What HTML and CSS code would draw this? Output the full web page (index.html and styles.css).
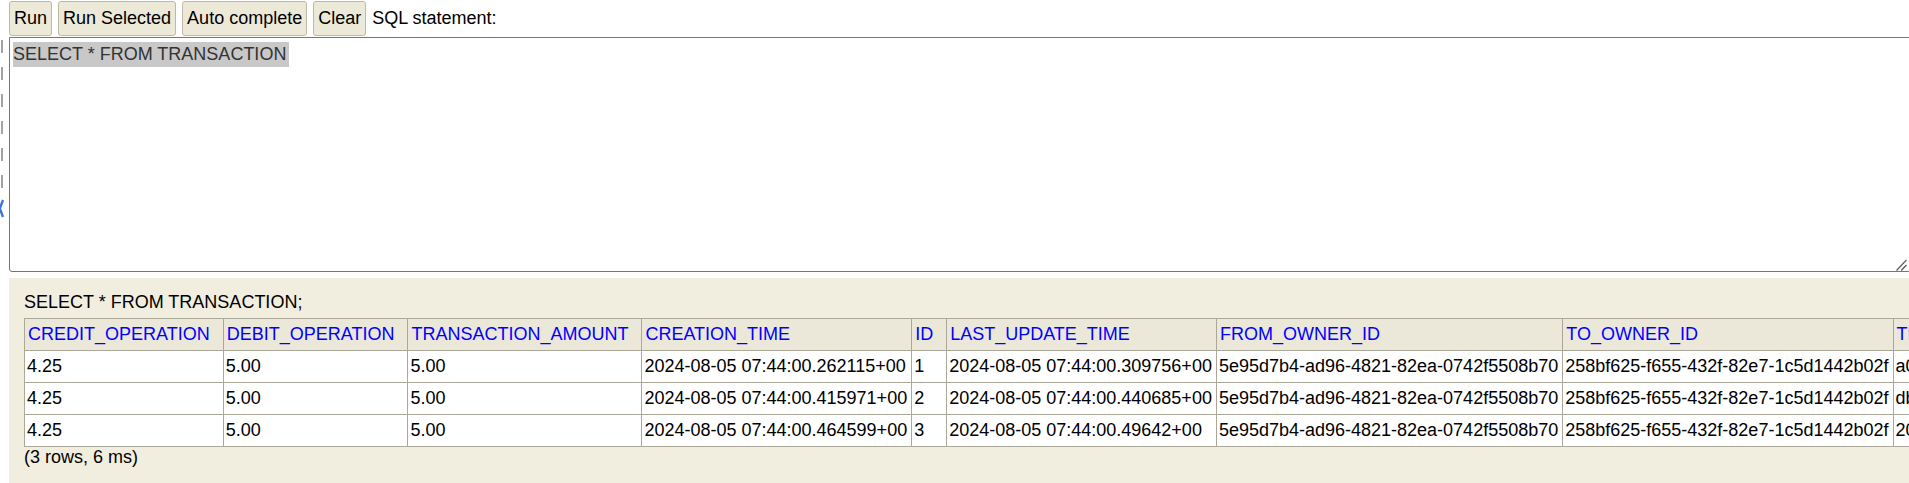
FILE: index.html
```html
<!DOCTYPE html>
<html>
<head>
<meta charset="utf-8">
<title>H2 Console</title>
<link rel="stylesheet" href="styles.css">
</head>
<body>
<div class="page">
  <div class="gutter">
    <div class="dashes"></div>
    <svg class="chev" width="5" height="20" viewBox="0 0 5 20"><path d="M4 1 L0.8 9.5 L4 18" fill="none" stroke="#3a78d4" stroke-width="2.4"/></svg>
  </div>
  <div class="main">
    <div class="toolbar">
      <button class="btn">Run</button>
      <button class="btn">Run Selected</button>
      <button class="btn">Auto complete</button>
      <button class="btn">Clear</button>
      <span class="label">SQL statement:</span>
    </div>
    <div class="editor">
      <span class="sel">SELECT * FROM TRANSACTION</span>
      <svg class="grip" width="12" height="12" viewBox="0 0 12 12"><path d="M0.5 11.5 L10.5 0.8 M5.2 11.5 L10.5 6" stroke="#555" stroke-width="1.2" fill="none"/></svg>
    </div>
    <div class="result">
      <div class="stmt">SELECT * FROM TRANSACTION;</div>
      <table class="grid">
        <thead>
          <tr>
            <th><a href="#">CREDIT_OPERATION</a></th>
            <th><a href="#">DEBIT_OPERATION</a></th>
            <th><a href="#">TRANSACTION_AMOUNT</a></th>
            <th><a href="#">CREATION_TIME</a></th>
            <th><a href="#">ID</a></th>
            <th><a href="#">LAST_UPDATE_TIME</a></th>
            <th><a href="#">FROM_OWNER_ID</a></th>
            <th><a href="#">TO_OWNER_ID</a></th>
            <th><a href="#">TRANSACTION_ID</a></th>
          </tr>
        </thead>
        <tbody>
          <tr>
            <td>4.25</td><td>5.00</td><td>5.00</td><td>2024-08-05 07:44:00.262115+00</td><td>1</td><td>2024-08-05 07:44:00.309756+00</td><td>5e95d7b4-ad96-4821-82ea-0742f5508b70</td><td>258bf625-f655-432f-82e7-1c5d1442b02f</td><td>a0c4e8f2-7b1d-4e39-9a56-3f2d8c1b7e40</td>
          </tr>
          <tr>
            <td>4.25</td><td>5.00</td><td>5.00</td><td>2024-08-05 07:44:00.415971+00</td><td>2</td><td>2024-08-05 07:44:00.440685+00</td><td>5e95d7b4-ad96-4821-82ea-0742f5508b70</td><td>258bf625-f655-432f-82e7-1c5d1442b02f</td><td>db37a1c9-04e6-4f8b-b2d5-6e91f0a3c728</td>
          </tr>
          <tr>
            <td>4.25</td><td>5.00</td><td>5.00</td><td>2024-08-05 07:44:00.464599+00</td><td>3</td><td>2024-08-05 07:44:00.49642+00</td><td>5e95d7b4-ad96-4821-82ea-0742f5508b70</td><td>258bf625-f655-432f-82e7-1c5d1442b02f</td><td>20f6b8d3-5c2a-4a17-8e94-b1c7d05e6f93</td>
          </tr>
        </tbody>
      </table>
      <div class="status">(3 rows, 6 ms)</div>
    </div>
  </div>
</div>
</body>
</html>
```
FILE: styles.css
```css
html, body {
  margin: 0;
  padding: 0;
  overflow: hidden;
  background: #ffffff;
}

body {
  font-family: "Liberation Sans", Arial, sans-serif;
  font-size: 18px;
  line-height: 21px;
  color: #000;
}

.page {
  display: flex;
  height: 100vh;
}

.gutter {
  flex: none;
  width: 9px;
  display: flex;
  flex-direction: column;
}

.dashes {
  margin-top: 40px;
  margin-left: 1px;
  width: 2px;
  height: 148px;
  background: repeating-linear-gradient(to bottom, #a4a4a4 0, #a4a4a4 13px, transparent 13px, transparent 27px);
}

.chev {
  display: block;
  margin-top: 11px;
  margin-left: -1px;
}

.main {
  flex: 1;
  min-width: 0;
  display: flex;
  flex-direction: column;
}

.toolbar {
  display: flex;
  align-items: center;
  gap: 6px;
  padding-top: 1px;
}

.btn {
  font-family: "Liberation Sans", Arial, sans-serif;
  font-size: 18px;
  line-height: 21px;
  color: #000;
  background: #ece9d8;
  border: 1px solid #bdb9a6;
  border-radius: 3px;
  padding: 6px 4px;
  margin: 0;
}

.label {
  white-space: nowrap;
}

.editor {
  position: relative;
  box-sizing: border-box;
  margin-top: 1px;
  height: 235px;
  width: calc(100% + 2px);
  border: 1px solid #767676;
  border-radius: 0 0 0 3px;
  padding: 4px 0 0 3px;
  background: #fff;
}

.sel {
  display: inline-block;
  height: 25px;
  line-height: 25px;
  padding-right: 3px;
  background: #c8c8c8;
  color: #333;
}

.grip {
  position: absolute;
  right: 2px;
  bottom: 0;
}

.result {
  flex: 1;
  margin-top: 6px;
  background: #f1eee0;
  padding: 14px 0 0 15px;
}

.stmt {
  margin-bottom: 5px;
  white-space: nowrap;
}

.grid {
  border-collapse: collapse;
  border: 1px solid #aca899;
  white-space: nowrap;
}

.grid th {
  text-align: left;
  font-weight: normal;
  background: #ebe8da;
  border: 1px solid #aca899;
  padding: 5px 13px 5px 3px;
  vertical-align: top;
}

.grid th a {
  color: #0000ff;
  text-decoration: none;
}

.grid td {
  background: #fff;
  border: 1px solid #aca899;
  padding: 5px 4px 5px 2px;
  vertical-align: top;
}

.status {
  white-space: nowrap;
}
```
